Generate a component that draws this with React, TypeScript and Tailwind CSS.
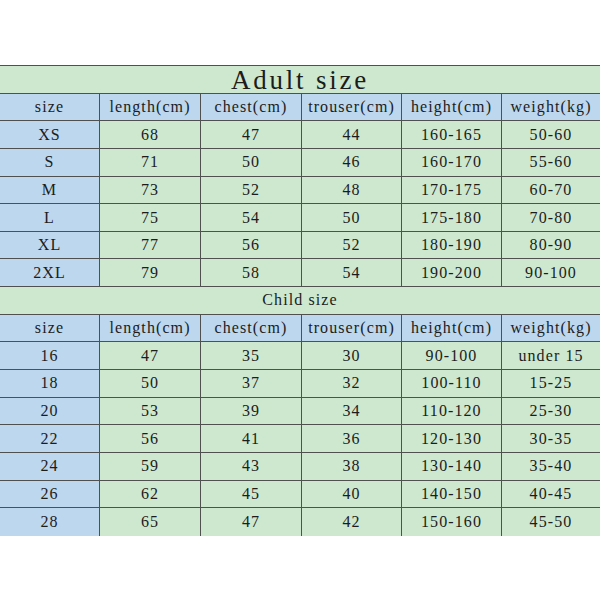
import React from "react";

const headers = ["size", "length(cm)", "chest(cm)", "trouser(cm)", "height(cm)", "weight(kg)"];

const adult = [
  ["XS", "68", "47", "44", "160-165", "50-60"],
  ["S", "71", "50", "46", "160-170", "55-60"],
  ["M", "73", "52", "48", "170-175", "60-70"],
  ["L", "75", "54", "50", "175-180", "70-80"],
  ["XL", "77", "56", "52", "180-190", "80-90"],
  ["2XL", "79", "58", "54", "190-200", "90-100"],
];

const child = [
  ["16", "47", "35", "30", "90-100", "under 15"],
  ["18", "50", "37", "32", "100-110", "15-25"],
  ["20", "53", "39", "34", "110-120", "25-30"],
  ["22", "56", "41", "36", "120-130", "30-35"],
  ["24", "59", "43", "38", "130-140", "35-40"],
  ["26", "62", "45", "40", "140-150", "40-45"],
  ["28", "65", "47", "42", "150-160", "45-50"],
];

function Row({ cells, header, last }: { cells: string[]; header?: boolean; last?: boolean }) {
  return (
    <div className={`grid grid-cols-[100px_101px_101px_100px_100px_98px] h-[27.65px] ${last ? "" : "border-b border-[#505050]"}`}>
      {cells.map((c, i) => (
        <div
          key={i}
          className={`flex items-center justify-center whitespace-nowrap ${i < 5 ? "border-r border-[#505050]" : ""} ${
            header || i === 0 ? "bg-[#bdd7ee]" : "bg-[#cde8cf]"
          }`}
        >
          {c}
        </div>
      ))}
    </div>
  );
}

export default function App() {
  return (
    <div className="w-[600px] h-[600px] bg-white text-[#1c1c1c] text-[16px] tracking-[1.1px] [font-family:'Liberation_Serif',serif]">
      <div className="h-[65px]" />
      <div className="border-t border-[#505050]">
        <div className="h-[27.65px] flex items-center justify-center bg-[#cde8cf] border-b border-[#505050] text-[27px] tracking-[2.8px] pt-[2px]">
          Adult size
        </div>
        <Row cells={headers} header />
        {adult.map((r, i) => (
          <Row key={i} cells={r} />
        ))}
        <div className="h-[27.65px] flex items-center justify-center bg-[#cde8cf] border-b border-[#505050]">
          Child size
        </div>
        <Row cells={headers} header />
        {child.map((r, i) => (
          <Row key={i} cells={r} last={i === child.length - 1} />
        ))}
      </div>
    </div>
  );
}
